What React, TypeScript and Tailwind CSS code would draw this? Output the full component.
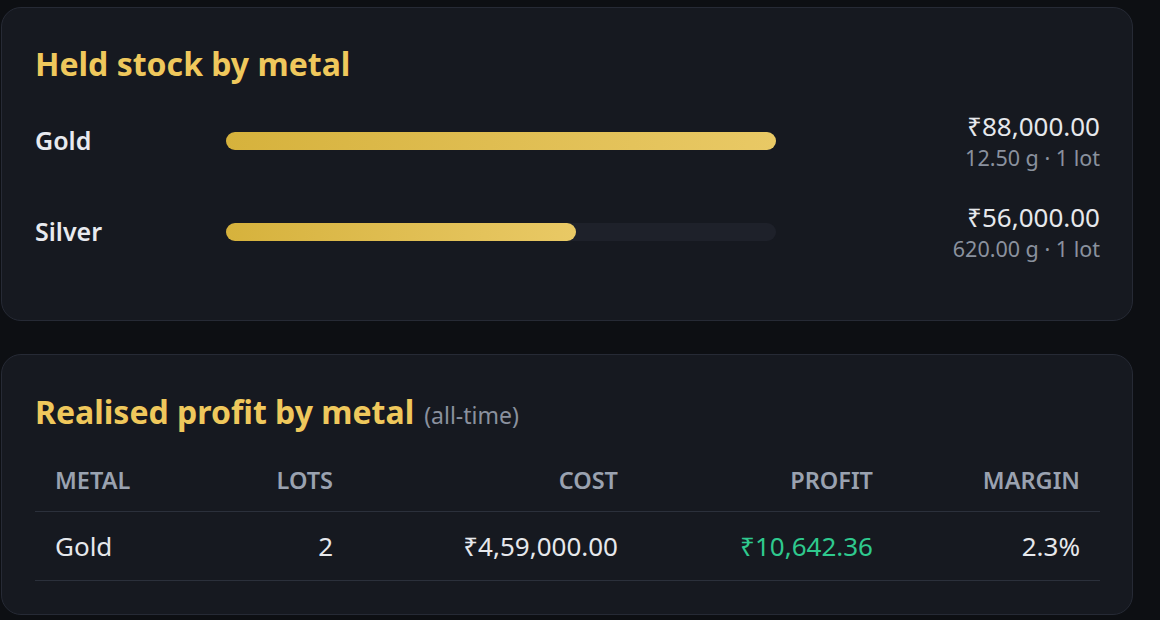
export default function App() {
  const metals = [
    { name: "Gold", value: "₹88,000.00", sub: "12.50 g · 1 lot", pct: 100 },
    { name: "Silver", value: "₹56,000.00", sub: "620.00 g · 1 lot", pct: 63.6 },
  ];

  return (
    <div
      className="min-h-[620px] bg-[#0d0f13] pt-[7px] pl-px"
      style={{ fontFamily: '"Noto Sans", "Open Sans", sans-serif' }}
    >
      <div className="w-[1132px] flex flex-col gap-[33px]">
        {/* held stock */}
        <section className="rounded-[20px] border border-[#262a35] bg-[#161920] pl-[33px] pr-[32px] pt-[38px] pb-[57px]">
          <h2 className="text-[32px] leading-[36px] font-bold text-[#efc85c]">Held stock by metal</h2>
          <div className="mt-[28px] flex flex-col gap-[29px]">
            {metals.map((m) => (
              <div key={m.name} className="grid grid-cols-[191px_550px_1fr] items-center">
                <div className="text-[25px] font-semibold text-[#e8eaef]">{m.name}</div>
                <div className="h-[18px] rounded-full bg-[#1e212a]">
                  <div
                    className="h-full rounded-full bg-gradient-to-r from-[#d6b23c] to-[#e9c965]"
                    style={{ width: `${m.pct}%` }}
                  />
                </div>
                <div className="flex flex-col items-end">
                  <div className="text-[26px] leading-[32px] text-[#e6e8ec]">{m.value}</div>
                  <div className="mt-[2px] text-[21.5px] leading-[28px] text-[#8a919e]">{m.sub}</div>
                </div>
              </div>
            ))}
          </div>
        </section>

        {/* realised profit */}
        <section className="rounded-[20px] border border-[#262a35] bg-[#161920] pl-[33px] pr-[32px] pt-[39px] pb-[33px]">
          <h2 className="text-[32px] leading-[36px] font-bold text-[#efc85c]">
            Realised profit by metal
            <span className="ml-[10px] text-[23px] font-normal text-[#8a919e]">(all-time)</span>
          </h2>
          <table className="mt-[33px] w-full table-fixed border-collapse">
            <colgroup>
              <col className="w-[160px]" />
              <col className="w-[158px]" />
              <col className="w-[285px]" />
              <col className="w-[255px]" />
              <col className="w-[207px]" />
            </colgroup>
            <thead>
              <tr className="border-b border-[#2b303b] text-[23.5px] leading-[28px] text-[#9aa2b0]">
                <th className="pl-[20px] pb-[17px] text-left font-semibold">METAL</th>
                <th className="pr-[20px] pb-[17px] text-right font-semibold">LOTS</th>
                <th className="pr-[20px] pb-[17px] text-right font-semibold">COST</th>
                <th className="pr-[20px] pb-[17px] text-right font-semibold">PROFIT</th>
                <th className="pr-[20px] pb-[17px] text-right font-semibold">MARGIN</th>
              </tr>
            </thead>
            <tbody>
              <tr className="border-b border-[#2b303b] text-[26px] leading-[32px] text-[#e6e8ec]">
                <td className="pl-[20px] py-[18px]">Gold</td>
                <td className="pr-[20px] py-[18px] text-right">2</td>
                <td className="pr-[20px] py-[18px] text-right">₹4,59,000.00</td>
                <td className="pr-[20px] py-[18px] text-right text-[#2fc98e]">₹10,642.36</td>
                <td className="pr-[20px] py-[18px] text-right">2.3%</td>
              </tr>
            </tbody>
          </table>
        </section>
      </div>
    </div>
  );
}
